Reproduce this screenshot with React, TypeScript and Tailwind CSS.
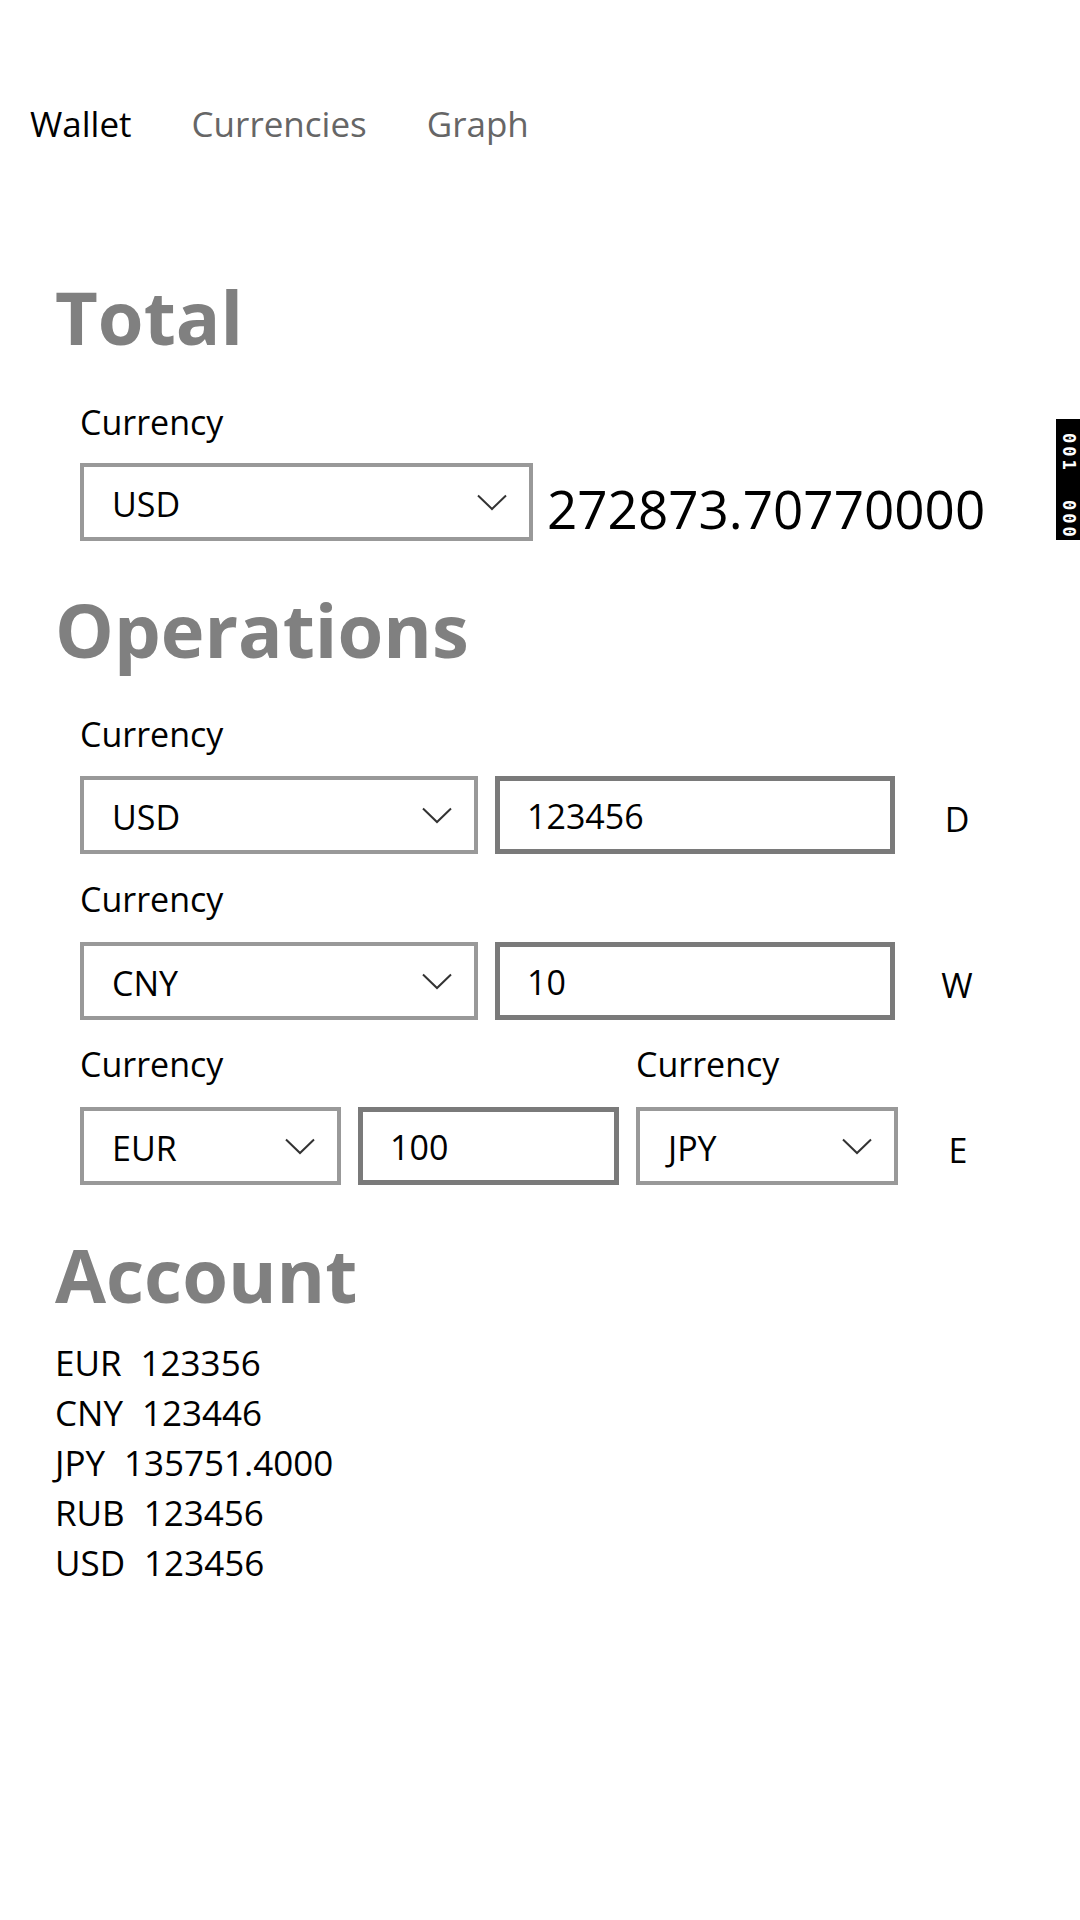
import React from "react";

const Chevron = () => (
  <svg width="30" height="17" viewBox="0 0 30 17" fill="none">
    <path d="M1 1.5 L15 15 L29 1.5" stroke="#333333" strokeWidth="2" />
  </svg>
);

function Combo({ value, w }: { value: string; w: string }) {
  return (
    <div className={`${w} h-[78px] shrink-0 border-4 border-[#999999] flex items-center justify-between pl-[28px] pr-[22px]`}>
      <span className="text-[34px] leading-none mt-[4px]">{value}</span>
      <Chevron />
    </div>
  );
}

function TextBox({ value, w, extra }: { value: string; w: string; extra: string }) {
  return (
    <div className={`${w} ${extra} h-[78px] shrink-0 border-[5px] border-[#7a7a7a] flex items-center pl-[27px]`}>
      <span className="text-[34px] leading-none mt-[2px]">{value}</span>
    </div>
  );
}

const Label = ({ children }: { children: React.ReactNode }) => (
  <div className="text-[34px] leading-none">{children}</div>
);

const accounts = [
  ["EUR", "123356"],
  ["CNY", "123446"],
  ["JPY", "135751.4000"],
  ["RUB", "123456"],
  ["USD", "123456"]
];

export default function App() {
  return (
    <div className="relative w-[1080px] min-h-[1920px] bg-white text-black font-['Open_Sans',sans-serif]">

      {/* TABS */}
      <div className="pt-[106px] pl-[30px] flex gap-[60px] text-[35px] leading-none">
        <span>Wallet</span>
        <span className="text-[#666666]">Currencies</span>
        <span className="text-[#666666]">Graph</span>
      </div>

      <div className="pl-[55px]">

        {/* TOTAL */}
        <h1 className="mt-[139px] text-[74px] font-bold leading-none text-[#808080]">Total</h1>

        <div className="pl-[25px]">
          <div className="mt-[51px]"><Label>Currency</Label></div>
          <div className="mt-[24px] flex items-center">
            <Combo value="USD" w="w-[453px]" />
            <span className="ml-[14px] mt-[12px] text-[53px] leading-none">272873.70770000</span>
          </div>
        </div>

        {/* OPERATIONS */}
        <h1 className="mt-[52px] text-[74px] font-bold leading-none text-[#808080]">Operations</h1>

        <div className="pl-[25px]">
          <div className="mt-[50px]"><Label>Currency</Label></div>
          <div className="mt-[25px] flex items-center">
            <Combo value="USD" w="w-[398px]" />
            <TextBox value="123456" w="w-[400px]" extra="ml-[17px]" />
            <span className="ml-[22px] w-[80px] text-center text-[34px] leading-none mt-[8px]">D</span>
          </div>

          <div className="mt-[28px]"><Label>Currency</Label></div>
          <div className="mt-[26px] flex items-center">
            <Combo value="CNY" w="w-[398px]" />
            <TextBox value="10" w="w-[400px]" extra="ml-[17px]" />
            <span className="ml-[22px] w-[80px] text-center text-[34px] leading-none mt-[8px]">W</span>
          </div>

          <div className="mt-[27px] grid grid-cols-[261px_261px_261px] gap-x-[17px]">
            <Label>Currency</Label>
            <div />
            <Label>Currency</Label>
          </div>
          <div className="mt-[26px] flex items-center">
            <Combo value="EUR" w="w-[261px]" />
            <TextBox value="100" w="w-[261px]" extra="ml-[17px]" />
            <div className="ml-[17px]">
              <Combo value="JPY" w="w-[262px]" />
            </div>
            <span className="ml-[20px] w-[80px] text-center text-[34px] leading-none mt-[8px]">E</span>
          </div>
        </div>

        {/* ACCOUNT */}
        <h1 className="mt-[53px] text-[74px] font-bold leading-none text-[#808080]">Account</h1>

        <div className="mt-[26px]">
          {accounts.map(([code, amount]) => (
            <div key={code} className="flex text-[35px] leading-[50px]">
              <span>{code}</span>
              <span className="ml-[19px]">{amount}</span>
            </div>
          ))}
        </div>

      </div>

      {/* FRAME COUNTER */}
      <div className="absolute right-0 top-[419px] w-[24px] h-[121px] bg-black flex flex-col items-center gap-[27px] pt-[14px] overflow-hidden">
        <span className="[writing-mode:vertical-rl] text-white font-['DejaVu_Sans_Mono',monospace] font-bold text-[17px] tracking-[3px] leading-none">
          001
        </span>
        <span className="[writing-mode:vertical-rl] text-white font-['DejaVu_Sans_Mono',monospace] font-bold text-[17px] tracking-[3px] leading-none">
          000
        </span>
      </div>

    </div>
  );
}
